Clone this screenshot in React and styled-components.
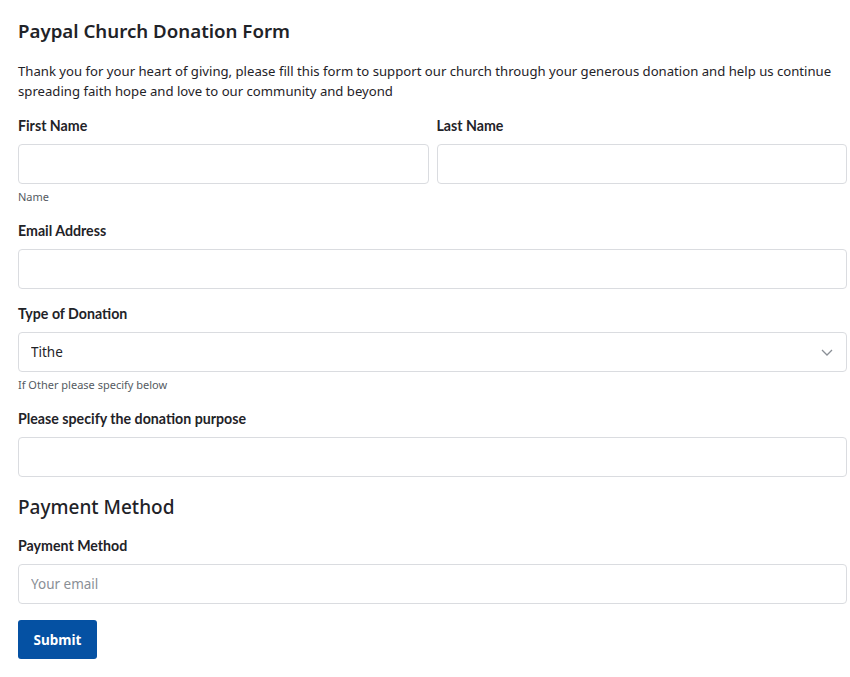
import React from 'react'
import styled, { createGlobalStyle } from 'styled-components'

const GlobalStyle = createGlobalStyle`
  body {
    margin: 0;
    background: #ffffff;
    font-family: "Noto Sans", "Open Sans", sans-serif;
    color: #1f2328;
  }
`

const Form = styled.form`
  padding: 16px 3px 18px 18px;
  display: flex;
  flex-direction: column;
`

const Title = styled.h1`
  margin: 0 0 15px;
  font-size: 18.7px;
  line-height: 30px;
  font-weight: 600;
  color: #1f2328;
`

const Section = styled.h2`
  margin: 0 0 16px;
  font-size: 19px;
  line-height: 28px;
  font-weight: 500;
  color: #1f2328;
`

const Intro = styled.p`
  margin: 0 0 16px;
  font-size: 13.15px;
  line-height: 20px;
  color: #1f2328;
`

const Row = styled.div`
  display: grid;
  grid-template-columns: 1fr 1fr;
  gap: 8px;
`

const Field = styled.div`
  display: flex;
  flex-direction: column;
  margin-bottom: ${p => (p.$hint ? '18px' : '16px')};
`

const Label = styled.label`
  font-family: Lato, "Noto Sans", sans-serif;
  font-size: 14.2px;
  font-weight: 700;
  line-height: 18px;
  color: #1f2328;
  margin-bottom: 9px;
`

const Input = styled.input`
  box-sizing: border-box;
  height: 40px;
  width: 100%;
  border: 1px solid #dadce0;
  border-radius: 4px;
  padding: 0 12px;
  font-family: "Noto Sans", sans-serif;
  font-size: 13.5px;
  color: #1f2328;
  background: #fff;
  outline: none;
  &::placeholder {
    color: #8a8f96;
  }
`

const SelectWrap = styled.div`
  position: relative;
`

const Select = styled.select`
  box-sizing: border-box;
  appearance: none;
  height: 40px;
  width: 100%;
  border: 1px solid #dadce0;
  border-radius: 4px;
  padding: 0 12px;
  font-family: "Noto Sans", sans-serif;
  font-size: 13.5px;
  color: #1f2328;
  background: #fff;
  outline: none;
`

const Chevron = styled.svg`
  position: absolute;
  right: 14px;
  top: 15px;
  width: 12px;
  height: 10px;
  pointer-events: none;
`

const Hint = styled.span`
  font-size: 11px;
  line-height: 14px;
  color: #555b62;
  margin-top: 6px;
`

const Button = styled.button`
  align-self: flex-start;
  height: 39px;
  padding: 0 15.5px;
  border: none;
  border-radius: 3px;
  background: #0551a3;
  color: #fff;
  font-family: "Noto Sans", sans-serif;
  font-size: 13.5px;
  font-weight: 700;
  cursor: pointer;
`

export default function App() {
  return (
    <>
      <GlobalStyle />
      <Form onSubmit={e => e.preventDefault()}>
        <Title>Paypal Church Donation Form</Title>
        <Intro>
          Thank you for your heart of giving, please fill this form to support our church through your generous donation and help us continue spreading faith hope and love to our community and beyond
        </Intro>
        <Row>
          <Field $hint>
            <Label>First Name</Label>
            <Input />
            <Hint>Name</Hint>
          </Field>
          <Field $hint>
            <Label>Last Name</Label>
            <Input />
          </Field>
        </Row>
        <Field>
          <Label>Email Address</Label>
          <Input type="email" />
        </Field>
        <Field $hint>
          <Label>Type of Donation</Label>
          <SelectWrap>
            <Select defaultValue="Tithe">
              <option>Tithe</option>
              <option>Offering</option>
              <option>Other</option>
            </Select>
            <Chevron viewBox="0 0 12 10">
              <path d="M1 3l5 5 5-5" fill="none" stroke="#8a8f96" strokeWidth="1.3" />
            </Chevron>
          </SelectWrap>
          <Hint>If Other please specify below</Hint>
        </Field>
        <Field>
          <Label>Please specify the donation purpose</Label>
          <Input />
        </Field>
        <Section>Payment Method</Section>
        <Field>
          <Label>Payment Method</Label>
          <Input placeholder="Your email" />
        </Field>
        <Button type="submit">Submit</Button>
      </Form>
    </>
  )
}
